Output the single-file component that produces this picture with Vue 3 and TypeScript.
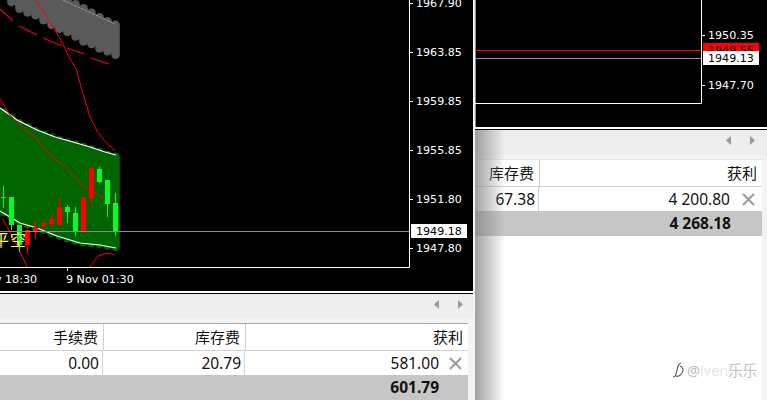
<script setup lang="ts">
type Pt = [number, number];
type Candle = { x: number; top: number; bottom: number; high: number; low: number; up: boolean };

// linear interpolation along a polyline
function at(line: Pt[], x: number): number {
  if (x <= line[0][0]) return line[0][1];
  for (let i = 1; i < line.length; i++) {
    const [x0, y0] = line[i - 1];
    const [x1, y1] = line[i];
    if (x <= x1) return y0 + ((y1 - y0) * (x - x0)) / (x1 - x0);
  }
  return line[line.length - 1][1];
}

const toPoints = (line: Pt[]) => line.map((p) => p.join(',')).join(' ');

const columns = Array.from({ length: 15 }, (_, i) => 3.5 + i * 8);

const upperBand: Pt[] = [[0, 108], [10, 115], [17, 120], [37, 130], [55, 137], [73, 142], [90, 147], [105, 152], [116, 155]];
const lowerBand: Pt[] = [[0, 211], [20, 223], [37, 228], [57, 236], [80, 243], [100, 245], [116, 248]];
const grayTop: Pt[] = [[0, -60], [63, -2], [75, 4], [83, 8], [92, 13], [99, 17], [107, 21], [116, 25]];
const grayBottom: Pt[] = [[0, -8], [7, -3], [15, 6], [25, 12], [32, 13], [40, 18], [50, 24], [58, 28], [72, 34], [82, 41], [90, 43], [98, 48], [107, 51], [116, 55]];

const greenBars = columns.map((x) => ({ x, y1: at(upperBand, x) + 2, y2: at(lowerBand, x) - 1 }));
const grayBars = columns.map((x) => ({ x, y1: at(grayTop, x), y2: at(grayBottom, x) }));

// solid fill under the round-capped columns, so no seams show between them
const bandFill = (bars: { x: number; y1: number; y2: number }[]) =>
  [
    ...bars.map((b) => `${b.x},${b.y1}`),
    '119,' + bars[bars.length - 1].y1,
    '119,' + bars[bars.length - 1].y2,
    ...[...bars].reverse().map((b) => `${b.x},${b.y2}`),
    '0,' + bars[0].y2,
    '0,' + bars[0].y1,
  ].join(' ');

const redDashes = [
  [0, 9, 13, 21],
  [19, 26, 37, 35],
  [43, 38, 62, 46],
  [67, 48, 84, 54],
  [91, 58, 109, 64],
];

const redCurves: Pt[][] = [
  [[36, 0], [50, 22], [62, 42], [68, 55], [76, 69], [82, 90], [90, 117], [97, 131], [103, 139], [115, 151]],
  [[0, 99], [10, 115], [25, 130], [35, 137], [50, 155], [65, 167], [82, 185], [93, 192], [105, 198], [118, 203]],
  [[2, 218], [17, 245], [27, 267]],
  [[90, 267], [98, 256], [107, 253], [115, 255]],
];

const candles: Candle[] = [
  { x: 3.5, top: 197, bottom: 198, high: 186, low: 208, up: true },
  { x: 11.5, top: 197, bottom: 225, high: 197, low: 230, up: true },
  { x: 19.5, top: 225, bottom: 245, high: 225, low: 252, up: true },
  { x: 27.5, top: 230, bottom: 245, high: 227, low: 254, up: false },
  { x: 35.5, top: 227, bottom: 231, high: 219, low: 239, up: false },
  { x: 43.5, top: 223, bottom: 226, high: 220, low: 230, up: false },
  { x: 51.5, top: 219, bottom: 224, high: 214, low: 228, up: false },
  { x: 59.5, top: 207, bottom: 225, high: 197, low: 225, up: false },
  { x: 67.5, top: 207, bottom: 212, high: 205, low: 223, up: true },
  { x: 75.5, top: 213, bottom: 232, high: 207, low: 236, up: true },
  { x: 83.5, top: 197, bottom: 232, high: 197, low: 232, up: false },
  { x: 91.5, top: 168, bottom: 198, high: 166, low: 206, up: false },
  { x: 99.5, top: 169, bottom: 182, high: 167, low: 183, up: true },
  { x: 107.5, top: 180, bottom: 204, high: 180, low: 217, up: true },
  { x: 115.5, top: 203, bottom: 232, high: 193, low: 236, up: true },
];

const leftPrices = [
  { y: 3, text: '1967.90' },
  { y: 52, text: '1963.85' },
  { y: 101, text: '1959.85' },
  { y: 150, text: '1955.85' },
  { y: 199, text: '1951.80' },
  { y: 248, text: '1947.80' },
];

const rightPrices = [
  { y: 35, text: '1950.35' },
  { y: 85, text: '1947.70' },
];
</script>

<template>
  <div class="screen">
    <section class="pane pane-left">
      <svg class="chart" width="473" height="291" viewBox="0 0 473 291">
        <polygon :points="bandFill(grayBars)" fill="#5a5a5a" />
        <polygon :points="bandFill(greenBars)" fill="#006400" />
        <g fill="none" stroke-linecap="round">
          <line v-for="b in grayBars" :key="'g' + b.x" :x1="b.x" :y1="b.y1" :x2="b.x" :y2="b.y2" stroke="#5a5a5a" stroke-width="8.6" />
          <line v-for="b in greenBars" :key="'b' + b.x" :x1="b.x" :y1="b.y1" :x2="b.x" :y2="b.y2" stroke="#006400" stroke-width="8.6" />
        </g>
        <polyline points="63,0 115,24" fill="none" stroke="#999" stroke-dasharray="3 1" />
        <polyline :points="toPoints(upperBand)" fill="none" stroke="#fff" stroke-width="1.2" />
        <polyline :points="toPoints(lowerBand)" fill="none" stroke="#fff" stroke-width="1.2" />
        <line v-for="d in redDashes" :key="d[0]" :x1="d[0]" :y1="d[1]" :x2="d[2]" :y2="d[3]" stroke="#f00" stroke-width="1.1" />
        <polyline v-for="(c, i) in redCurves" :key="i" :points="toPoints(c)" fill="none" stroke="#f00" />
        <g v-for="c in candles" :key="c.x">
          <line :x1="c.x" :y1="c.high" :x2="c.x" :y2="c.low" :stroke="c.up ? '#00ff2a' : '#f00'" />
          <rect :x="c.x - 2.5" :y="c.top" width="5" :height="c.bottom - c.top" :fill="c.up ? '#00ff2a' : '#f00'" />
        </g>
        <text class="signal" x="-7" y="246">平空</text>
        <line x1="0" y1="231.5" x2="409" y2="231.5" stroke="#8c8c8c" />
        <path d="M0 267.5H409.5V0" fill="none" stroke="#fff" />
        <path d="M67.5 268V271" stroke="#fff" />
        <g class="axis-text">
          <g v-for="p in leftPrices" :key="p.y">
            <path :d="`M410 ${p.y + 0.5}h3`" stroke="#fff" />
            <text x="416" :y="p.y + 4">{{ p.text }}</text>
          </g>
          <text x="37" y="283" text-anchor="end">7 Nov 18:30</text>
          <text x="66" y="283">9 Nov 01:30</text>
        </g>
        <rect x="411" y="224" width="56" height="14" fill="#fff" />
        <text class="axis-text dark" x="416" y="235">1949.18</text>
      </svg>
      <div class="rule"></div>
      <div class="toolbar">
        <svg class="arrow" width="5" height="9" viewBox="0 0 5 9"><path d="M5 0V9L0 4.5Z" /></svg>
        <svg class="arrow" width="5" height="9" viewBox="0 0 5 9"><path d="M0 0V9L5 4.5Z" /></svg>
      </div>
      <div class="table-wrap">
        <div class="table table-left">
          <div class="cell head">手续费</div>
          <div class="cell head">库存费</div>
          <div class="cell head last">获利</div>
          <div class="cell">0.00</div>
          <div class="cell">20.79</div>
          <div class="cell last profit">
            <span>581.00</span>
            <svg class="close" width="13" height="13" viewBox="0 0 13 13"><path d="M1 1L12 12M12 1L1 12" /></svg>
          </div>
          <div class="total">
            <span>601.79</span>
          </div>
        </div>
      </div>
    </section>

    <section class="pane pane-right">
      <svg class="chart" width="292" height="127" viewBox="0 0 292 127">
        <path d="M0.5 0V127" stroke="#8c8c8c" />
        <path d="M0 103.5H226.5V0" fill="none" stroke="#fff" />
        <line x1="0" y1="50.5" x2="226" y2="50.5" stroke="#f00" />
        <line x1="0" y1="58.5" x2="226" y2="58.5" stroke="#8c96a0" />
        <g class="axis-text">
          <g v-for="p in rightPrices" :key="p.y">
            <path :d="`M227 ${p.y + 0.5}h3`" stroke="#fff" />
            <text x="233" :y="p.y + 4">{{ p.text }}</text>
          </g>
        </g>
        <rect x="228" y="43" width="56" height="9" fill="#f00" />
        <text class="axis-text dark" x="233" y="54">1949.55</text>
        <rect x="228" y="51" width="56" height="14" fill="#fff" />
        <text class="axis-text dark" x="233" y="62">1949.13</text>
      </svg>
      <div class="rule"></div>
      <div class="toolbar">
        <svg class="arrow" width="5" height="9" viewBox="0 0 5 9"><path d="M5 0V9L0 4.5Z" /></svg>
        <svg class="arrow" width="5" height="9" viewBox="0 0 5 9"><path d="M0 0V9L5 4.5Z" /></svg>
      </div>
      <div class="table-wrap">
        <div class="table table-right">
          <div class="cell head">库存费</div>
          <div class="cell head last">获利</div>
          <div class="cell">67.38</div>
          <div class="cell last profit">
            <span>4 200.80</span>
            <svg class="close" width="13" height="13" viewBox="0 0 13 13"><path d="M1 1L12 12M12 1L1 12" /></svg>
          </div>
          <div class="total">
            <span>4 268.18</span>
          </div>
        </div>
        <div class="blank"></div>
      </div>
      <div class="fade"></div>
      <div class="watermark">
        <svg class="mark" width="14" height="18" viewBox="0 0 14 18" fill="none" stroke="#555" stroke-width="1.1">
          <path d="M2 16C5 16 5 13 6 9S7 3 10 2" />
          <path d="M9 5C12 6 13 9 11 12S7 16 5 15" />
        </svg>
        <span class="at">@</span><span class="name">lven</span><span class="at">乐乐</span>
      </div>
    </section>
  </div>
</template>

<style>
html,
body {
  margin: 0;
  overflow: hidden;
}
</style>

<style scoped>
.screen {
  display: flex;
  width: 767px;
  height: 400px;
  overflow: hidden;
  background: #f5f5f5;
  color: #111;
  font-family: "Noto Sans", "Noto Sans CJK SC", sans-serif;
  font-size: 15.5px;
}

.pane {
  display: flex;
  flex-direction: column;
  background: #eee;
}

.pane-left {
  width: 473px;
  margin-right: 2px;
}

.pane-right {
  position: relative;
  flex: 1;
  min-width: 0;
}

.chart {
  display: block;
  flex: none;
  background: #000;
}

.axis-text {
  fill: #fff;
  font-family: "DejaVu Sans", sans-serif;
  font-size: 11.1px;
}

.axis-text.dark {
  fill: #000;
}

.signal {
  fill: #ffff3c;
  font-family: "Noto Sans CJK SC", sans-serif;
  font-size: 16px;
  letter-spacing: 1px;
}

.rule {
  flex: none;
  box-sizing: border-box;
  height: 3px;
  border-top: 2px solid #fff;
  background: #000;
}

.toolbar {
  flex: none;
  box-sizing: border-box;
  display: flex;
  align-items: center;
  justify-content: flex-end;
  gap: 19px;
  height: 24px;
  padding-right: 10px;
  padding-bottom: 4px;
  background: #eee;
}

.pane-right .toolbar {
  height: 25px;
  padding-right: 12px;
}

.arrow path {
  fill: #9a9a9a;
}

.table-wrap {
  flex: 1;
  display: flex;
  flex-direction: column;
  min-height: 0;
  padding-right: 5px;
  background: #f3f3f3;
}

.pane-left .table-wrap {
  padding-top: 5px;
}

.pane-right .table-wrap {
  padding-top: 4px;
}

.blank {
  flex: 1;
  background: #fff;
}

.table {
  display: grid;
  grid-template-rows: 27px 24px 25px;
  border-top: 1px solid #a8a8a8;
  background: #fff;
}

.pane-right .table {
  border-top-color: #e4e4e4;
}

.table-left {
  grid-template-columns: 103px 142px 223px;
}

.table-right {
  grid-template-columns: 64px 223px;
}

.cell {
  box-sizing: border-box;
  display: flex;
  align-items: center;
  justify-content: flex-end;
  padding-top: 1px;
  padding-right: 3px;
  border-right: 1px solid #d0d0d0;
  line-height: 1;
}

.cell.head {
  margin-right: -1px;
  padding-top: 0;
  padding-right: 5px;
  border-bottom: 1px solid #d0d0d0;
  font-size: 15px;
}

.cell.last {
  margin-right: 0;
  border-right: 0;
}

.profit {
  gap: 10px;
  padding-right: 6px;
}

.pane-right .profit {
  gap: 12px;
  padding-right: 7px;
}

.total {
  grid-column: 1 / -1;
  display: flex;
  align-items: center;
  justify-content: flex-end;
  padding-top: 1px;
  padding-right: 29px;
  background: #c6c6c6;
  font-weight: 700;
  line-height: 1;
}

.pane-right .total {
  padding-right: 31px;
}

.close path {
  fill: none;
  stroke: #9a9a9a;
  stroke-width: 2;
}

.fade {
  position: absolute;
  top: 130px;
  bottom: 0;
  left: 0;
  width: 30px;
  background: linear-gradient(90deg, rgba(130, 130, 130, 0.75), rgba(200, 200, 200, 0));
  pointer-events: none;
}

.watermark {
  position: absolute;
  top: 361px;
  left: 196px;
  display: flex;
  align-items: center;
  font-size: 14.5px;
  line-height: 18px;
}

.mark {
  margin-right: 2px;
}

.watermark .at {
  color: #bcbcbc;
}

.watermark .name {
  color: #e6e6e6;
}
</style>
